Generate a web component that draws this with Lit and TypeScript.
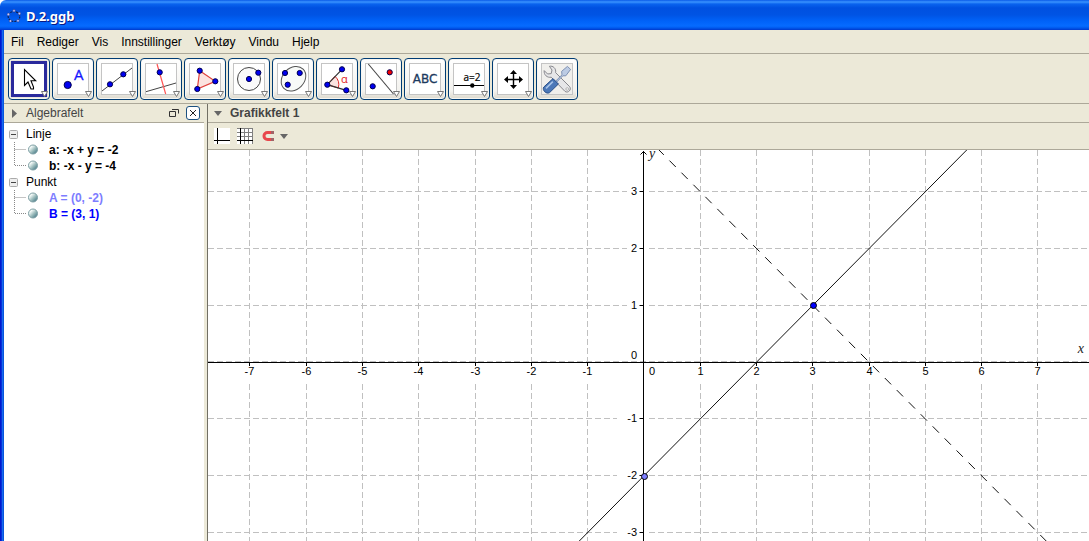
import { LitElement, html, svg, css } from "lit";
import { customElement, state } from "lit/decorators.js";

const dot = (x: number, y: number, r = 2.6, fill = "#0000f0") =>
  svg`<circle cx=${x} cy=${y} r=${r} fill=${fill} stroke="#000050" stroke-width="1"/>`;

interface Tool {
  label: string;
  art: unknown;
  selected?: boolean;
  menu: boolean;
}

const TOOLS: Tool[] = [
  {
    label: "Flytt", selected: true, menu: true,
    art: svg`<path d="M15.5 10.5V26.5L19 23L22 30H24.5V28L22 21.8H26.7Z" fill="#fff" stroke="#000" stroke-width="1.1"/>`,
  },
  {
    label: "Nytt punkt", menu: true,
    art: svg`${dot(14.7, 26, 3.6)}<text x="21" y="21" class="glyph" font-size="15" fill="#1414ff" stroke="#1414ff" stroke-width=".3">A</text>`,
  },
  {
    label: "Linje", menu: true,
    art: svg`<path d="M5 32L35 9" stroke="#444"/>${dot(13, 25.3)}${dot(26.3, 15.3)}`,
  },
  {
    label: "Normal", menu: true,
    art: svg`<path d="M5 32.7L35 24" stroke="#444"/><path d="M16 5L24.7 35" stroke="#f55" stroke-width="1.2"/>${dot(18.7, 13.3)}`,
  },
  {
    label: "Mangekant", menu: true,
    art: svg`<path d="M14.7 11.7L30.3 22.3L12.3 30Z" fill="#fbe3e0" stroke="#e0403c" stroke-width="1.2"/>${dot(14.7, 11.7)}${dot(30.3, 22.3)}${dot(12.3, 30)}`,
  },
  {
    label: "Sirkel", menu: true,
    art: svg`<circle cx="20" cy="20" r="11.5" fill="#fafafa" stroke="#444"/>${dot(20, 20)}${dot(29.3, 13.7)}`,
  },
  {
    label: "Kjeglesnitt", menu: true,
    art: svg`<ellipse cx="20.5" cy="19.7" rx="13.6" ry="10.8" transform="rotate(-45 20.5 19.7)" fill="#f8faf8" stroke="#555"/>${dot(12, 14)}${dot(26.7, 14)}${dot(14.7, 25.7)}`,
  },
  {
    label: "Vinkel", menu: true,
    art: svg`<path d="M10.3 25.7L18 17.3A11.4 11.4 0 0 1 21.3 29Z" fill="#fbe3e0" stroke="#e02828"/><path d="M25 10.3L10.3 25.7L29.3 31.3" fill="none" stroke="#333" stroke-width="1.2"/>${dot(25, 10.3)}${dot(10.3, 25.7)}${dot(29.3, 31.3)}<text x="24" y="23.5" font-size="11" class="glyph" fill="#e01818">α</text>`,
  },
  {
    label: "Speiling", menu: true,
    art: svg`<path d="M7.3 5L32.5 35" stroke="#444" stroke-width="1.1"/>${dot(28.7, 13.3, 2.6, "#f00000")}${dot(11.7, 27.3)}`,
  },
  {
    label: "Tekst", menu: true,
    art: svg`<text x="20" y="24" text-anchor="middle" class="wide" font-size="12" fill="#1c3a5e" stroke="#1c3a5e" stroke-width=".3">ABC</text>`,
  },
  {
    label: "Glider", menu: true,
    art: svg`<text x="23" y="22" text-anchor="middle" class="glyph" font-size="10" stroke="#000" stroke-width=".2">a=2</text><path d="M5 26.5H35" stroke="#000"/><circle cx="23.3" cy="26.5" r="2.2"/>`,
  },
  {
    label: "Flytt grafikkfeltet", menu: true,
    art: svg`<path d="M13 20.5H28M20.5 13V28" stroke="#000" stroke-width="1.4"/><path d="M20.5 11L24 15H17ZM20.5 30L24 26H17ZM11 20.5L15 17V24ZM30 20.5L26 17V24Z"/>`,
  },
  {
    label: "Verktøy", menu: false,
    art: svg`
      <path d="M12.4 7.3C16 6.4 19.4 9.6 18.6 13.6L32.6 27.6C35 30.6 31 34.6 28 32.4L14.2 18.2C10.4 19 6.6 16 7.2 11.6L10.6 15L14.2 14.6L15 11Z" fill="#e6e6e8" stroke="#88888e"/>
      <circle cx="30.2" cy="30" r="1.3" fill="#fff" stroke="#999" stroke-width=".7"/>
      <path d="M18.4 22.4L25 15.8L24.6 12.4L30.4 7.4L33.6 10.4L28.8 16.8L25.8 16.8L19.4 23.4Z" fill="#bccbe4" stroke="#7488ac" stroke-width=".9"/>
      <path d="M16 19.6L21.4 25L12.6 33.6C9.4 35.6 4.8 31.2 6.8 28Z" fill="#4c78b8" stroke="#284f88"/>
      <path d="M15.8 22.6L9 29.4" stroke="#a8c4e8" stroke-width="1.6"/>`,
  },
];

const MENUS = ["Fil", "Rediger", "Vis", "Innstillinger", "Verktøy", "Vindu", "Hjelp"];

@customElement("ggb-toolbar")
export class GgbToolbar extends LitElement {
  static styles = css`
    :host { display: flex; gap: 2px; padding: 4px; height: 41px; }
    .tool {
      width: 42px; height: 42px; padding: 0; border: 1px solid #003c74; border-radius: 4px;
      background: linear-gradient(#fff, #f3f2ee 80%, #dcd8cc); display: block;
      box-shadow: inset 0 0 0 1px #f6f5f1;
    }
    .selected { background: #e6e3da; }
    svg { display: block; }
    .glyph { font-family: "Open Sans", "Noto Sans", sans-serif; }
    .wide { font-family: "DejaVu Sans", sans-serif; }
  `;

  render() {
    return TOOLS.map(
      (t) => html`<button class="tool ${t.selected ? "selected" : ""}" aria-label=${t.label}>
        <svg width="40" height="40" viewBox="0 0 40 40">
          ${t.selected
            ? svg`<rect x="3.5" y="3.5" width="33" height="33" fill="#fff" stroke="#2a2a9c" stroke-width="3"/>`
            : svg`<rect x="4.5" y="4.5" width="31" height="31" fill=${t.menu ? "#fff" : "#f0efec"} stroke="#c4c4c4"/>`}
          ${t.art}
          ${t.menu ? svg`<path d="M32.5 32.5H38.5L35.5 37.5Z" fill="#fff" stroke="#777"/>` : ""}
        </svg>
      </button>`
    );
  }
}

interface Item { text: string; color: string; }
const TREE: { name: string; items: Item[] }[] = [
  { name: "Linje", items: [{ text: "a: -x + y = -2", color: "#000" }, { text: "b: -x - y = -4", color: "#000" }] },
  { name: "Punkt", items: [{ text: "A = (0, -2)", color: "#7d7dff" }, { text: "B = (3, 1)", color: "#0000ff" }] },
];

@customElement("ggb-algebra")
export class GgbAlgebra extends LitElement {
  static styles = css`
    :host { display: block; background: #fff; }
    .head {
      display: flex; align-items: center; height: 18px; padding: 0 4px 0 7px;
      background: #ece9d8; border-bottom: 1px solid #aca899; color: #444;
    }
    .title { flex: 1; padding-left: 9px; }
    button { border: 0; padding: 0; background: none; display: block; }
    svg { display: block; }
    .close { margin-left: 7px; }
    ul { list-style: none; margin: 0; padding: 0; }
    .tree { padding: 3px 0 0 5px; }
    .row { display: flex; align-items: center; height: 16px; }
    .group { gap: 8px; }
    .leaf { font-weight: bold; gap: 10px; }
  `;

  render() {
    return html`
      <div class="head">
        <button aria-label="Vis stilfelt"><svg width="6" height="9"><path d="M1 0V9L6 4.5Z" fill="#666"/></svg></button>
        <span class="title">Algebrafelt</span>
        <button aria-label="Eget vindu"><svg width="10" height="8" fill="none" stroke="#333"><path d="M.5 2.5H6.5V7.5H.5ZM3 .5H9.5V4.5"/></svg></button>
        <button class="close" aria-label="Lukk"><svg width="14" height="14" fill="none"><rect x=".5" y=".5" width="13" height="13" rx="2.5" fill="#fff" stroke="#1c5180"/><path d="M4 4L10 10M10 4L4 10" stroke="#222"/></svg></button>
      </div>
      <ul class="tree">
        ${TREE.map((g) => html`<li>
          <div class="row group">
            <button aria-label="Skjul ${g.name}"><svg width="9" height="9"><rect x=".5" y=".5" width="8" height="8" rx="1" fill="#eee" stroke="#aaa"/><path d="M2 4.5H7" stroke="#444"/></svg></button>
            <span>${g.name}</span>
          </div>
          <ul>
            ${g.items.map((it, i) => html`<li class="row leaf">
              <svg width="30" height="16">
                <path d=${i === g.items.length - 1 ? "M5.5 0V7.5H17" : "M5.5 0V16M5.5 7.5H17"} fill="none" stroke="#888" stroke-dasharray="1 1"/>
                <defs><linearGradient id="ball" x1="0" y1="0" x2="1" y2="1"><stop offset=".25" stop-color="#f4faf8"/><stop offset=".55" stop-color="#9cbcbc"/><stop offset="1" stop-color="#2c6478"/></linearGradient></defs>
                <circle cx="24" cy="7.5" r="4.5" fill="url(#ball)" stroke="#7d9fa4"/>
              </svg>
              <span style="color:${it.color}">${it.text}</span>
            </li>`)}
          </ul>
        </li>`)}
      </ul>`;
  }
}

const ORIGIN = { x: 435.4, y: 211.4 };
const UNIT = { x: 56.28, y: 56.8 };
const px = (v: number) => Math.round(ORIGIN.x + v * UNIT.x);
const py = (v: number) => Math.round(ORIGIN.y - v * UNIT.y);
const range = (a: number, b: number) => Array.from({ length: Math.max(0, b - a + 1) }, (_, i) => a + i);

@customElement("ggb-plot")
export class GgbPlot extends LitElement {
  @state() private size = { w: 0, h: 0 };
  private observer = new ResizeObserver(() => this.measure());

  static styles = css`
    :host { display: block; position: relative; overflow: hidden; background: #fff; }
    .canvas { position: absolute; inset: 0; width: 100%; height: 100%; display: block; }
    .grid { stroke: #c0c0c0; stroke-dasharray: 6 3; }
    .axis { stroke: #000; fill: none; }
    .num { font: 11px "Liberation Sans", Arial, sans-serif; }
    .name { font: italic 14px "Liberation Serif", serif; fill: #222; }
  `;

  connectedCallback() {
    super.connectedCallback();
    this.observer.observe(this);
  }

  disconnectedCallback() {
    this.observer.disconnect();
    super.disconnectedCallback();
  }

  firstUpdated() {
    this.measure();
  }

  private measure() {
    const { clientWidth: w, clientHeight: h } = this;
    if (w !== this.size.w || h !== this.size.h) this.size = { w, h };
  }

  render() {
    const ax = px(0) + 0.5;
    const ay = 212.5;
    const xs = range(-7, Math.floor((this.size.w - 12 - ORIGIN.x) / UNIT.x));
    const ys = range(-Math.floor((this.size.h - 6 - ORIGIN.y) / UNIT.y), 3);
    return html`<svg class="canvas" role="img" aria-label="Grafikkfelt 1">
      ${xs.filter((v) => v).map((v) => svg`<line class="grid" x1=${px(v) + 0.5} x2=${px(v) + 0.5} y1="0" y2="100%"/>`)}
      ${ys.map((v) => svg`<line class="grid" x1="0" x2="100%" y1=${py(v) + 0.5} y2=${py(v) + 0.5}/>`)}
      ${xs.filter((v) => v).map((v) => svg`<rect x=${px(v) - 7} y="213" width="14" height="21" fill="#fff"/>`)}
      ${ys.filter((v) => v).map((v) => svg`<rect x=${v < 0 ? 409 : 419} y=${py(v) - 6} width=${v < 0 ? 31 : 21} height="14" fill="#fff"/>`)}
      <line class="axis" x1="0" x2="100%" y1=${ay} y2=${ay}/>
      <line class="axis" x1=${ax} x2=${ax} y1="1" y2="100%"/>
      <path class="axis" d="M${ax - 3} 4.5L${ax} 1.5L${ax + 3} 4.5"/>
      ${xs.map((v) => svg`
        ${v ? svg`<line class="axis" x1=${px(v) + 0.5} x2=${px(v) + 0.5} y1="212" y2="216"/>` : ""}
        <text class="num" text-anchor="middle" x=${v ? px(v) + 0.5 : px(0) + 9} y="225">${v}</text>`)}
      ${ys.map((v) => svg`
        ${v ? svg`<line class="axis" x1=${ax - 4} x2=${ax} y1=${py(v) + 0.5} y2=${py(v) + 0.5}/>` : ""}
        <text class="num" text-anchor="end" x="429" y=${v ? py(v) + 4 : 209}>${v}</text>`)}
      <text class="name" x="441" y="8">y</text>
      <text class="name" x="100%" dx="-5" y="203" text-anchor="end">x</text>
      <line x1=${ORIGIN.x + 0.5 - 2 * UNIT.x} y1=${ORIGIN.y + 0.8 + 4 * UNIT.y} x2=${ORIGIN.x + 0.5 + 6 * UNIT.x} y2=${ORIGIN.y + 0.8 - 4 * UNIT.y} stroke="#111"/>
      <line x1="449.5" y1="-1.5" x2=${ORIGIN.x + 0.5 + 8 * UNIT.x} y2=${ORIGIN.y + 0.8 + 4 * UNIT.y} stroke="#111" stroke-dasharray="9 8"/>
      <circle cx=${ax + 1} cy="326.5" r="3" fill="#7d7dff" stroke="#000"/>
      <circle cx=${px(3) + 1.5} cy="155.5" r="3" fill="#0000ff" stroke="#000"/>
    </svg>`;
  }
}

@customElement("app-root")
export class AppRoot extends LitElement {
  static styles = css`
    :host {
      display: flex; flex-direction: column; height: 100vh; overflow: hidden;
      font: 12px "Liberation Sans", Arial, sans-serif; color: #000; background: #fff;
    }
    button { border: 0; padding: 0; background: none; font: inherit; color: inherit; display: block; }
    svg { display: block; }
    .titlebar {
      display: flex; align-items: center; gap: 5px; height: 28px; padding: 2px 0 0 7px;
      border-radius: 6px 0 0 0; color: #fff;
      background: linear-gradient(#0a5ae8 0, #3a93ff 2px, #0a63ee 4px, #0050e0 8px, #0054e4 15px, #0062f8 21px, #066bff 26px, #0058ec 28px, #0038cc 30px);
    }
    .caption { font: bold 13px "Noto Sans", "Open Sans", sans-serif; text-shadow: 1px 1px 0 #0a1883; }
    .frame {
      flex: 1; min-height: 0; display: flex; flex-direction: column; padding-left: 4px;
      background: linear-gradient(90deg, #0019cf 1px, #0831d9 1px 2px, #166aee 2px 3px, #0855dd 3px 4px, #ece9d8 4px);
    }
    .menu { display: flex; gap: 13px; padding: 0 7px; height: 23px; border-bottom: 1px solid #aca899; }
    ggb-toolbar { border-bottom: 1px solid #aca899; }
    .work { flex: 1; min-height: 0; display: grid; grid-template-columns: 200px minmax(0, 1fr); gap: 3px; }
    .graphics { display: flex; flex-direction: column; border-left: 1px solid #716f64; }
    .head { display: flex; align-items: center; gap: 8px; height: 18px; padding-left: 6px; border-bottom: 1px solid #aca899; font-weight: bold; color: #444; }
    .stylebar { display: flex; align-items: center; gap: 7px; height: 26px; padding-left: 6px; border-bottom: 1px solid #aca899; }
    .snap { display: flex; align-items: center; gap: 5px; padding-left: 2px; }
    ggb-plot { flex: 1; }
  `;

  render() {
    return html`
      <header class="titlebar">
        <svg width="14" height="14" viewBox="0 0 14 14" fill="none">
          <ellipse cx="7" cy="7.5" rx="5.8" ry="5" stroke="#102050" stroke-width="1.2" stroke-dasharray="2 1"/>
          <g fill="#c8ccff" stroke="#203080" stroke-width=".5"><circle cx="7" cy="1.8" r="1.3"/><circle cx="12.4" cy="4.6" r="1.3"/><circle cx="11" cy="11.8" r="1.3"/><circle cx="3.4" cy="12" r="1.3"/><circle cx="1.4" cy="5.4" r="1.3"/></g>
        </svg>
        <span class="caption">D.2.ggb</span>
      </header>
      <div class="frame">
        <nav class="menu">${MENUS.map((m) => html`<button>${m}</button>`)}</nav>
        <ggb-toolbar></ggb-toolbar>
        <main class="work">
          <ggb-algebra></ggb-algebra>
          <section class="graphics">
            <div class="head">
              <button aria-label="Skjul stilfelt"><svg width="8" height="5"><path d="M0 0H8L4 5Z" fill="#666"/></svg></button>
              <span>Grafikkfelt 1</span>
            </div>
            <div class="stylebar">
              <button aria-label="Akser"><svg width="16" height="16"><rect width="16" height="16" fill="#fff"/><path d="M3.5 0V16M0 12.5H16" stroke="#000"/></svg></button>
              <button aria-label="Rutenett"><svg width="16" height="16"><rect width="16" height="16" fill="#fff"/><path d="M7.5 0V16M11.5 0V16M15.5 0V16M0 .5H16M0 4.5H16M0 8.5H16" stroke="#808080"/><path d="M3.5 0V16M0 12.5H16" stroke="#000"/></svg></button>
              <button class="snap" aria-label="Festing"><svg width="13" height="12" fill="none"><path d="M9 2.5H5.5A3.4 3.4 0 0 0 5.5 9.5H9" stroke="#e8474c" stroke-width="3"/><path d="M9 2.5H12M9 9.5H12" stroke="#a06468" stroke-width="3"/></svg><svg width="8" height="5"><path d="M0 0H8L4 5Z" fill="#666"/></svg></button>
            </div>
            <ggb-plot></ggb-plot>
          </section>
        </main>
      </div>`;
  }
}
